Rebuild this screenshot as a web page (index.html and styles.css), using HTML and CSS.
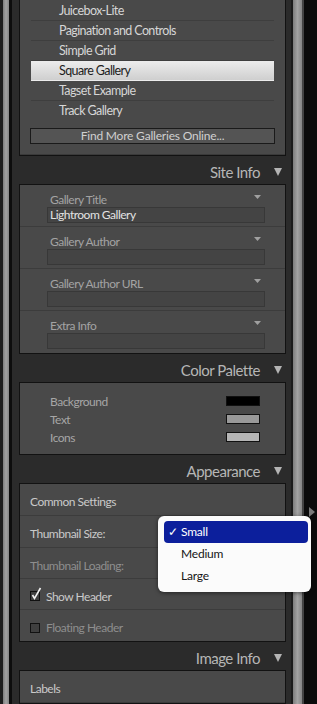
FILE: index.html
```html
<!DOCTYPE html>
<html lang="en">
<head>
    <meta charset="UTF-8">
    <meta name="viewport" content="width=device-width, initial-scale=1.0">
    <title>Web Module Panels</title>
    <link rel="stylesheet" href="styles.css">
</head>
<body>
    <div class="edge"></div>
    <div class="rail"></div>
    <div class="gap"></div>

    <main class="column">
        <!-- Template browser -->
        <div class="panel panel-top">
            <ul class="gallery-list">
                <li>Juicebox-Lite</li>
                <li>Pagination and Controls</li>
                <li>Simple Grid</li>
                <li class="selected">Square Gallery</li>
                <li>Tagset Example</li>
                <li>Track Gallery</li>
            </ul>
            <button class="find-button">Find More Galleries Online...</button>
        </div>

        <!-- Site Info -->
        <div class="section-head">
            <span>Site Info</span>
            <svg class="tri" width="8" height="8" viewBox="0 0 8 8"><path d="M0 0 H8 L4 8 Z"/></svg>
        </div>
        <div class="panel">
            <div class="field">
                <div class="field-label">Gallery Title <svg class="mini-tri" width="7" height="4" viewBox="0 0 7 4"><path d="M0 0 H7 L3.5 4 Z"/></svg></div>
                <div class="field-input">Lightroom Gallery</div>
            </div>
            <div class="field">
                <div class="field-label">Gallery Author <svg class="mini-tri" width="7" height="4" viewBox="0 0 7 4"><path d="M0 0 H7 L3.5 4 Z"/></svg></div>
                <div class="field-input"></div>
            </div>
            <div class="field">
                <div class="field-label">Gallery Author URL <svg class="mini-tri" width="7" height="4" viewBox="0 0 7 4"><path d="M0 0 H7 L3.5 4 Z"/></svg></div>
                <div class="field-input"></div>
            </div>
            <div class="field">
                <div class="field-label">Extra Info <svg class="mini-tri" width="7" height="4" viewBox="0 0 7 4"><path d="M0 0 H7 L3.5 4 Z"/></svg></div>
                <div class="field-input"></div>
            </div>
        </div>

        <!-- Color Palette -->
        <div class="section-head">
            <span>Color Palette</span>
            <svg class="tri" width="8" height="8" viewBox="0 0 8 8"><path d="M0 0 H8 L4 8 Z"/></svg>
        </div>
        <div class="panel palette">
            <div class="swatch-row"><span>Background</span><span class="swatch swatch-bg"></span></div>
            <div class="swatch-row"><span>Text</span><span class="swatch swatch-text"></span></div>
            <div class="swatch-row"><span>Icons</span><span class="swatch swatch-icons"></span></div>
        </div>

        <!-- Appearance -->
        <div class="section-head">
            <span>Appearance</span>
            <svg class="tri" width="8" height="8" viewBox="0 0 8 8"><path d="M0 0 H8 L4 8 Z"/></svg>
        </div>
        <div class="panel appearance">
            <div class="app-row">Common Settings</div>
            <div class="app-row">Thumbnail Size:</div>
            <div class="app-row dim">Thumbnail Loading:</div>
            <div class="app-row">
                <span class="check checked">
                    <svg width="12" height="14" viewBox="0 0 12 14"><path d="M2.5 8 L4.5 11.5 L10.5 1"/></svg>
                </span>
                Show Header
            </div>
            <div class="app-row dim">
                <span class="check"></span>
                Floating Header
            </div>

            <!-- Popup menu for Thumbnail Size -->
            <div class="popup">
                <div class="popup-item active"><span class="tick">✓</span>Small</div>
                <div class="popup-item">Medium</div>
                <div class="popup-item">Large</div>
            </div>
        </div>

        <!-- Image Info -->
        <div class="section-head">
            <span>Image Info</span>
            <svg class="tri" width="8" height="8" viewBox="0 0 8 8"><path d="M0 0 H8 L4 8 Z"/></svg>
        </div>
        <div class="panel">
            <div class="app-row">Labels</div>
        </div>
    </main>

    <div class="gap2"></div>
    <div class="rail rail-right"></div>
    <div class="gap3"></div>

    <svg class="edge-marker" width="6" height="10" viewBox="0 0 6 10"><path d="M0 0 L6 5 L0 10 Z"/></svg>
</body>
</html>
```

FILE: styles.css
```css
body {
    margin: 0;
    padding: 0;
    height: 704px;
    overflow: hidden;
    display: flex;
    background-color: #0b0b0b;
    font-family: Lato, "Open Sans", sans-serif;
    font-size: 12px;
    letter-spacing: -0.5px;
    color: #c8c8c8;
    position: relative;
}

.edge {
    width: 3px;
    background-color: #1e1e1e;
}

.rail {
    width: 6px;
    background: linear-gradient(to right, #7d7d7d, #a3a3a3 50%, #858585);
}

.gap {
    width: 3px;
    background-color: #0d0d0d;
}

.gap2 {
    width: 2px;
    background-color: #1c1c1c;
}

.rail-right {
    width: 9px;
}

.gap3 {
    width: 2px;
    background-color: #444;
}

.column {
    width: 279px;
    box-sizing: border-box;
    padding: 0 5px 0 7px;
    background-color: #2b2b2b;
    display: flex;
    flex-direction: column;
}

.panel {
    width: 267px;
    box-sizing: border-box;
    border: 1px solid #121212;
    background-color: #494949;
    position: relative;
}

.panel-top {
    border-top: none;
    padding-top: 1px;
    box-shadow: inset 0 -32px 0 -31px #3a3a3a;
}

/* gallery list */
.gallery-list {
    list-style: none;
    margin: 0 11px 0 11px;
    padding: 0 0 4px 0;
}

.gallery-list li {
    height: 19px;
    line-height: 19px;
    padding-left: 28px;
    border-bottom: 1px solid #3e3e3e;
    color: #d6d6d6;
    font-size: 12.5px;
    letter-spacing: -0.6px;
}

.gallery-list li:last-child {
    border-bottom: none;
}

.gallery-list li.selected {
    background: linear-gradient(#ececec, #cfcfcf);
    color: #1d1d1d;
    border-bottom-color: transparent;
}

.find-button {
    display: block;
    box-sizing: border-box;
    width: 245px;
    height: 16px;
    margin: 4px 0 11px 10px;
    padding: 0;
    border: 1px solid #1a1a1a;
    background-color: #545454;
    color: #d0d0d0;
    font-family: inherit;
    font-size: 12px;
    letter-spacing: -0.2px;
    line-height: 14px;
}

/* section headers */
.section-head {
    height: 28px;
    box-sizing: border-box;
    padding: 3px 4px 0 0;
    display: flex;
    align-items: center;
    justify-content: flex-end;
    gap: 14px;
    color: #b6b6b6;
    font-size: 15px;
    letter-spacing: -0.5px;
}

.tri {
    fill: #b4b4b4;
}

/* Site info fields */
.field {
    height: 42px;
    box-sizing: border-box;
    padding: 8px 20px 3px 27px;
    border-bottom: 1px solid #3c3c3c;
}

.field:last-child {
    border-bottom: none;
}

.field-label {
    height: 14px;
    line-height: 14px;
    padding-left: 3px;
    color: #a3a3a3;
    display: flex;
    justify-content: space-between;
    align-items: center;
}

.mini-tri {
    fill: #a0a0a0;
    margin-right: 4px;
    margin-top: -6px;
}

.field-input {
    height: 16px;
    box-sizing: border-box;
    border: 1px solid #383838;
    background-color: #444;
    padding-left: 2px;
    line-height: 14px;
    color: #e2e2e2;
}

/* Color palette */
.palette {
    padding: 9px 0 8px 0;
}

.swatch-row {
    height: 18px;
    display: flex;
    align-items: center;
    justify-content: space-between;
    padding: 0 25px 0 30px;
    color: #a6a6a6;
}

.swatch {
    width: 34px;
    height: 10px;
    box-sizing: border-box;
    border: 1px solid #111;
}

.swatch-bg {
    background-color: #000;
}

.swatch-text {
    background-color: #999;
}

.swatch-icons {
    background-color: #b5b5b5;
}

/* Appearance */
.app-row {
    height: 32px;
    box-sizing: border-box;
    padding: 4px 0 0 10px;
    display: flex;
    align-items: center;
    border-bottom: 1px solid #3c3c3c;
    color: #cacaca;
}

.appearance .app-row:nth-child(3),
.appearance .app-row:nth-child(4) {
    height: 31px;
}

.appearance .app-row:nth-child(5) {
    height: 31px;
    border-bottom: none;
}

.app-row.dim {
    color: #8e8e8e;
}

.check {
    width: 10px;
    height: 10px;
    box-sizing: border-box;
    border: 1px solid #111;
    background-color: #3f3f3f;
    margin-right: 6px;
    position: relative;
}

.check svg {
    position: absolute;
    left: -1px;
    top: -5px;
    fill: none;
    stroke: #f2f2f2;
    stroke-width: 1.6;
}

/* popup menu */
.popup {
    position: absolute;
    left: 138px;
    top: 32px;
    width: 153px;
    height: 76px;
    box-sizing: border-box;
    padding: 5px 3px 0 6px;
    background-color: #fbfbfb;
    border-radius: 6px;
    box-shadow: 0 1px 4px rgba(0, 0, 0, 0.5);
    z-index: 2;
    letter-spacing: -0.2px;
}

.popup-item {
    height: 22px;
    line-height: 22px;
    padding-left: 17px;
    color: #151515;
    font-size: 12px;
    position: relative;
}

.popup-item.active {
    background-color: #0c1f9c;
    color: #fff;
    border-radius: 4px;
}

.tick {
    position: absolute;
    left: 4px;
}

.edge-marker {
    position: absolute;
    left: 309px;
    top: 507px;
    fill: #7a7a7a;
}
```
